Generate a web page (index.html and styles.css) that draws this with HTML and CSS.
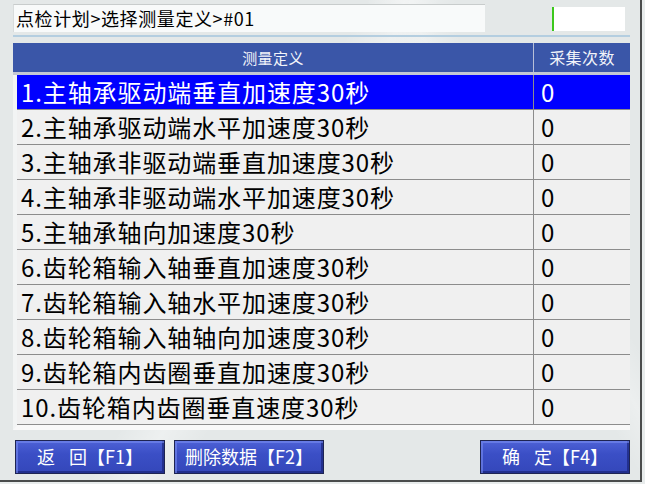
FILE: index.html
```html
<!DOCTYPE html>
<html lang="zh-CN">
<head>
<meta charset="utf-8">
<title>选择测量定义</title>
<link rel="stylesheet" href="styles.css">
</head>
<body>
<div class="screen">
  <div class="topbar">
    <div class="title">点检计划&gt;选择测量定义&gt;#01</div>
    <div class="status"></div>
  </div>
  <div class="rule"></div>
  <div class="table">
    <div class="thead">
      <div class="th">测量定义</div>
      <div class="th">采集次数</div>
    </div>
    <div class="tbody">
      <div class="row sel"><div class="c1">1.主轴承驱动端垂直加速度30秒</div><div class="c2">0</div></div>
      <div class="row"><div class="c1">2.主轴承驱动端水平加速度30秒</div><div class="c2">0</div></div>
      <div class="row"><div class="c1">3.主轴承非驱动端垂直加速度30秒</div><div class="c2">0</div></div>
      <div class="row"><div class="c1">4.主轴承非驱动端水平加速度30秒</div><div class="c2">0</div></div>
      <div class="row"><div class="c1">5.主轴承轴向加速度30秒</div><div class="c2">0</div></div>
      <div class="row"><div class="c1">6.齿轮箱输入轴垂直加速度30秒</div><div class="c2">0</div></div>
      <div class="row"><div class="c1">7.齿轮箱输入轴水平加速度30秒</div><div class="c2">0</div></div>
      <div class="row"><div class="c1">8.齿轮箱输入轴轴向加速度30秒</div><div class="c2">0</div></div>
      <div class="row"><div class="c1">9.齿轮箱内齿圈垂直加速度30秒</div><div class="c2">0</div></div>
      <div class="row"><div class="c1">10.齿轮箱内齿圈垂直速度30秒</div><div class="c2">0</div></div>
    </div>
  </div>
  <div class="buttons">
    <div class="btn">返<span class="gap"></span>回【F1】</div>
    <div class="btn">删除数据【F2】</div>
    <div class="spacer"></div>
    <div class="btn">确<span class="gap"></span>定【F4】</div>
  </div>
</div>
</body>
</html>
```
FILE: styles.css
```css
html, body {
  margin: 0;
  padding: 0;
  background: #e8ecec;
}
body {
  width: 645px;
  height: 484px;
  overflow: hidden;
  font-family: "Noto Sans CJK SC", "Noto Sans", sans-serif;
}
.screen {
  width: 642px;
  height: 482px;
  box-sizing: border-box;
  border-right: 2px solid #4a4c4c;
  border-bottom: 2px solid #4a4c4c;
  background:
    linear-gradient(120deg, transparent 40%, rgba(255,255,255,0.35) 45%, transparent 50%),
    linear-gradient(60deg, transparent 70%, rgba(255,255,255,0.3) 74%, transparent 78%),
    #e4e8e8;
  padding-top: 4px;
}
.topbar {
  display: flex;
  align-items: flex-start;
  margin-left: 13px;
  height: 28px;
}
.title {
  width: 472px;
  height: 28px;
  box-sizing: border-box;
  background: #f8fafa;
  border-top: 1px solid #c8cccc;
  border-left: 1px solid #d8dcdc;
  font-size: 18px;
  letter-spacing: 0.6px;
  line-height: 26px;
  padding-left: 2px;
  color: #000;
  white-space: nowrap;
}
.status {
  margin-left: 67px;
  margin-top: 3px;
  width: 73px;
  height: 24px;
  box-sizing: border-box;
  background: #ffffff;
  border-left: 2px solid #3cc81c;
}
.rule {
  margin: 3px 0 0 13px;
  width: 617px;
  height: 2px;
  background: #b4cee0;
}
.table {
  margin: 6px 0 0 13px;
  width: 617px;
}
.thead {
  display: grid;
  grid-template-columns: 520px 1px 1fr;
  height: 29px;
  background: #3a56a8;
  border-bottom: 3px solid #c4c8d4;
}
.th {
  color: #f2f4fa;
  font-size: 15px;
  letter-spacing: 0.4px;
  line-height: 29px;
  text-align: center;
}
.th + .th {
  grid-column: 3;
  font-size: 16px;
  border-left: 1px solid #b8c0d8;
  margin-left: -1px;
}
.tbody {
  border-left: 4px solid #f2f4f4;
  border-bottom: 5px solid #f8f8f8;
  box-shadow: inset 1px 0 0 #d0d4d4;
}
.row {
  display: grid;
  grid-template-columns: 516px 1px 1fr;
  height: 34px;
  border-bottom: 1px solid #8c8c8c;
  background: #f0f0f0;
  color: #000;
  font-size: 24px;
  letter-spacing: 0.9px;
  line-height: 33px;
  white-space: nowrap;
}
.row .c1 {
  padding-left: 4px;
  overflow: hidden;
}
.row .c2 {
  grid-column: 3;
  border-left: 1px solid #8c8c8c;
  margin-left: -1px;
  padding-left: 7px;
}
.row.sel {
  background: #0000ff;
  color: #ffffff;
}
.buttons {
  display: flex;
  margin: 10px 0 0 15px;
  width: 615px;
}
.btn {
  width: 150px;
  height: 34px;
  box-sizing: border-box;
  border: 1px solid #1e2452;
  background: linear-gradient(#4e62d6, #3b4fc6 40%, #3447ba);
  box-shadow: inset 2px 2px 0 rgba(120,140,240,0.6), inset -2px -2px 0 rgba(20,30,110,0.6);
  color: #ffffff;
  font-size: 18px;
  line-height: 31px;
  text-align: center;
  white-space: nowrap;
}
.gap {
  display: inline-block;
  width: 14px;
}
.btn + .btn {
  margin-left: 9px;
}
.spacer {
  flex: 1;
}
.spacer + .btn {
  margin-left: 0;
}
```
